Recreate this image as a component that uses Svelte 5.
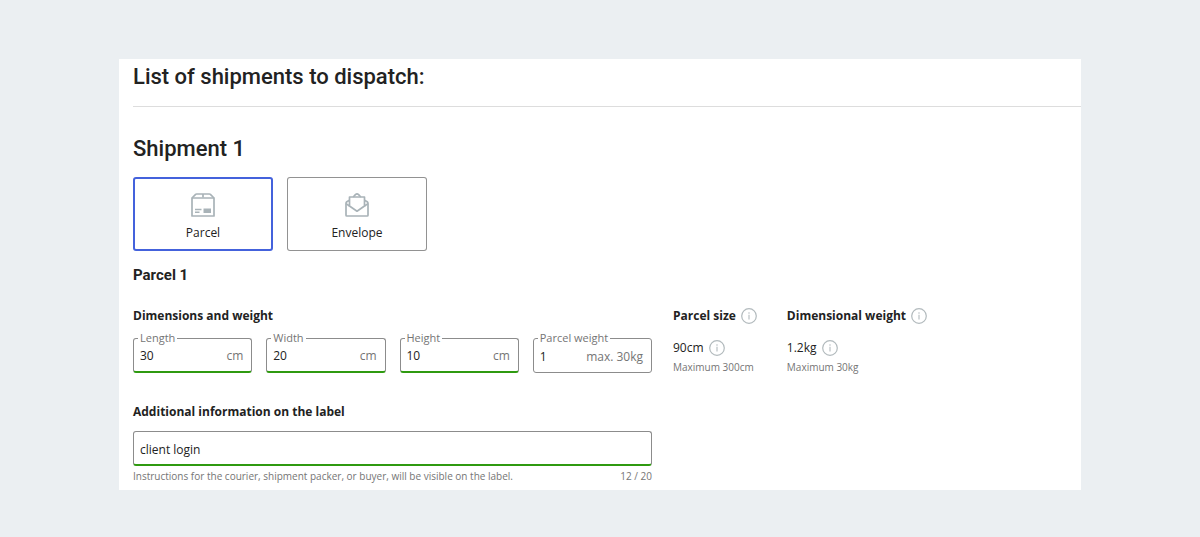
<script>
  let kind = $state('parcel');
  let note = $state('client login');

  let fields = $state([
    { id: 'length', label: 'Length', value: '30', unit: 'cm', valid: true },
    { id: 'width', label: 'Width', value: '20', unit: 'cm', valid: true },
    { id: 'height', label: 'Height', value: '10', unit: 'cm', valid: true },
    { id: 'weight', label: 'Parcel weight', value: '1', unit: 'max. 30kg', valid: false }
  ]);

  const stats = [
    { title: 'Parcel size', value: '90cm', limit: 'Maximum 300cm' },
    { title: 'Dimensional weight', value: '1.2kg', limit: 'Maximum 30kg' }
  ];
</script>

{#snippet info()}
  <svg class="info" viewBox="0 0 16 16" aria-hidden="true">
    <circle cx="8" cy="8" r="7.3" fill="none" stroke="#b2babd" stroke-width="1.2" />
    <path d="M8 6.8v4.7" stroke="#b2babd" stroke-width="1.1" />
    <circle cx="8" cy="4.9" r="0.75" fill="#b2babd" />
  </svg>
{/snippet}

<main>
  <h1>List of shipments to dispatch:</h1>
  <hr />

  <h2>Shipment 1</h2>
  <div class="kinds" role="radiogroup" aria-label="Shipment type">
    <label class="kind" class:selected={kind === 'parcel'}>
      <input type="radio" name="kind" value="parcel" bind:group={kind} />
      <svg viewBox="0 0 24 24" fill="none" stroke="#a9b3b8" stroke-width="1.7" stroke-linejoin="round" aria-hidden="true">
        <path d="M1 5v18h22V5z" />
        <path d="M1 5l3.600-3.600Q5 1 5.600 1h12.800q.6 0 1 .4L23 5M12 1v3.500" />
        <path d="M4 16.500h6.500M4 19.300h4.500" stroke-width="1.400" />
        <path d="M12.500 15.500H20v4.500h-7.500z" fill="#a9b3b8" stroke="none" />
      </svg>
      <span>Parcel</span>
    </label>
    <label class="kind" class:selected={kind === 'envelope'}>
      <input type="radio" name="kind" value="envelope" bind:group={kind} />
      <svg viewBox="0 0 24 24" fill="none" stroke="#a9b3b8" stroke-width="1.7" stroke-linejoin="round" aria-hidden="true">
        <path d="M4.500 7.200L1.800 8.800Q1 9.400 1 10.400V22.200q0 .8.8.8h20.400q.8 0 .8-.8V10.400q0-1-.8-1.600l-2.700-1.600" />
        <path d="M4.500 13V4h15v9L12 18.200z" />
        <path d="M1 10.600L4.500 13M23 10.600L19.500 13" />
        <path d="M8.200 4L10.400 1.600q1.600-1.300 3.200 0L15.800 4" />
      </svg>
      <span>Envelope</span>
    </label>
  </div>

  <h3>Parcel 1</h3>
  <div class="details">
    <section class="form">
      <h4>Dimensions and weight</h4>
      <div class="fields">
        {#each fields as field (field.id)}
          <div class="field" class:valid={field.valid}>
            <label for={field.id}>{field.label}</label>
            <input id={field.id} type="text" inputmode="numeric" size="1" bind:value={field.value} />
            <span class="unit">{field.unit}</span>
          </div>
        {/each}
      </div>

      <label class="title" for="note">Additional information on the label</label>
      <div class="field note valid">
        <input id="note" type="text" maxlength="20" aria-describedby="note-help" bind:value={note} />
      </div>
      <div class="help">
        <span id="note-help">Instructions for the courier, shipment packer, or buyer, will be visible on the label.</span>
        <span>{note.length} / 20</span>
      </div>
    </section>

    {#each stats as stat (stat.title)}
      <section class="stat">
        <h4>{stat.title} {@render info()}</h4>
        <p class="value">{stat.value} {@render info()}</p>
        <p class="limit">{stat.limit}</p>
      </section>
    {/each}
  </div>
</main>

<style>
  :global(body) {
    background: #ebeff2;
    color: #222;
    font: 12px/18px "Open Sans", sans-serif;
  }
  main {
    margin: 59px 119px 47px;
    padding: 4px 0 6px 14px;
    background: #fff;
  }
  h1, h2, h3, h4, p { margin: 0; }
  h1, h2 {
    font: 500 22px/28px Roboto, sans-serif;
  }
  hr {
    margin: 15px 0 28px;
    border: 0;
    border-top: 1px solid #ddd;
  }
  .kinds {
    display: flex;
    gap: 14px;
    margin-top: 14px;
  }
  .kind {
    position: relative;
    box-sizing: border-box;
    width: 140px;
    height: 74px;
    padding-top: 16px;
    display: flex;
    flex-direction: column;
    align-items: center;
    gap: 7px;
    border-radius: 3px;
    box-shadow: inset 0 0 0 1px #929292;
    cursor: pointer;
  }
  .kind.selected { box-shadow: inset 0 0 0 2px #4462dc; }
  .kind input {
    position: absolute;
    inset: 0;
    margin: 0;
    opacity: 0;
  }
  .kind svg {
    width: 24px;
    height: 24px;
  }
  h3 {
    margin: 14px 0 22px;
    font: 700 15px/20px Roboto, sans-serif;
  }
  .details {
    display: flex;
    align-items: flex-start;
  }
  .form {
    flex: 0 1 519px;
    margin-right: 21px;
  }
  h4, .title {
    display: block;
    font: 700 12px/18px "Open Sans", sans-serif;
  }
  .fields {
    display: grid;
    grid-template-columns: repeat(4, 1fr);
    gap: 14px;
    margin: 13px 0 30px;
  }
  .field {
    position: relative;
    box-sizing: border-box;
    height: 35px;
    padding: 2px 8px 0 6px;
    display: flex;
    align-items: center;
    border: 1px solid #8c8c8c;
    border-radius: 3px;
  }
  .field.valid {
    border-bottom: 2px solid #2f9a10;
  }
  .field label {
    position: absolute;
    top: -10px;
    left: 4px;
    padding: 0 2px;
    background: #fff;
    color: #757575;
    font-size: 11px;
  }
  .field input {
    flex: 1;
    min-width: 0;
    padding: 0;
    border: 0;
    outline: 0;
    background: none;
    color: inherit;
    font: inherit;
  }
  .unit { color: #757575; }
  .note {
    margin-top: 10px;
    padding-top: 4px;
  }
  .help {
    display: flex;
    justify-content: space-between;
    margin-top: 2px;
  }
  .help, .limit {
    color: #757575;
    font-size: 10px;
    line-height: 16px;
  }
  .stat { margin-right: 30px; }
  .stat h4, .value {
    display: flex;
    align-items: center;
    gap: 5px;
  }
  .value { margin: 14px 0 2px; }
  .info {
    width: 16px;
    height: 16px;
  }
</style>
